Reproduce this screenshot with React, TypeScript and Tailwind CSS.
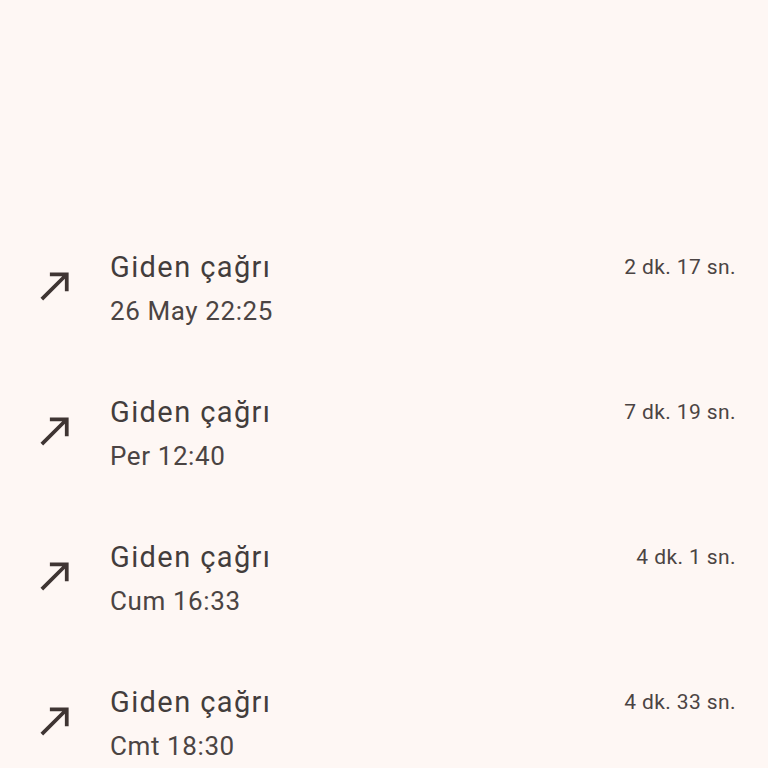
const calls = [
  { when: "26 May 22:25", length: "2 dk. 17 sn." },
  { when: "Per 12:40", length: "7 dk. 19 sn." },
  { when: "Cum 16:33", length: "4 dk. 1 sn." },
  { when: "Cmt 18:30", length: "4 dk. 33 sn." },
];

function CallMadeIcon() {
  return (
    <svg viewBox="0 0 24 24" className="h-[45px] w-[45px] shrink-0" fill="#3f3533">
      <path d="M9 5v2h6.59L4 18.59 5.41 20 17 8.41V15h2V5z" />
    </svg>
  );
}

export default function App() {
  return (
    <div className="h-[768px] w-[768px] overflow-hidden bg-[#fef7f4] font-['Roboto',sans-serif]">
      <div className="flex flex-col pt-[245px]">
        {calls.map((call) => (
          <div key={call.when} className="flex h-[145px] items-start pl-[33px] pr-[32px]">
            <div className="mt-[18px]">
              <CallMadeIcon />
            </div>
            <div className="ml-[32px] flex-1">
              <div className="text-[29px] leading-[44px] tracking-[1.4px] text-[#433d3c]">Giden çağrı</div>
              <div className="text-[26px] leading-[44px] tracking-[0.6px] text-[#4b4443]">{call.when}</div>
            </div>
            <div className="mt-[10px] text-[21px] leading-[24px] tracking-[0.4px] text-[#4b4443]">{call.length}</div>
          </div>
        ))}
      </div>
    </div>
  );
}
